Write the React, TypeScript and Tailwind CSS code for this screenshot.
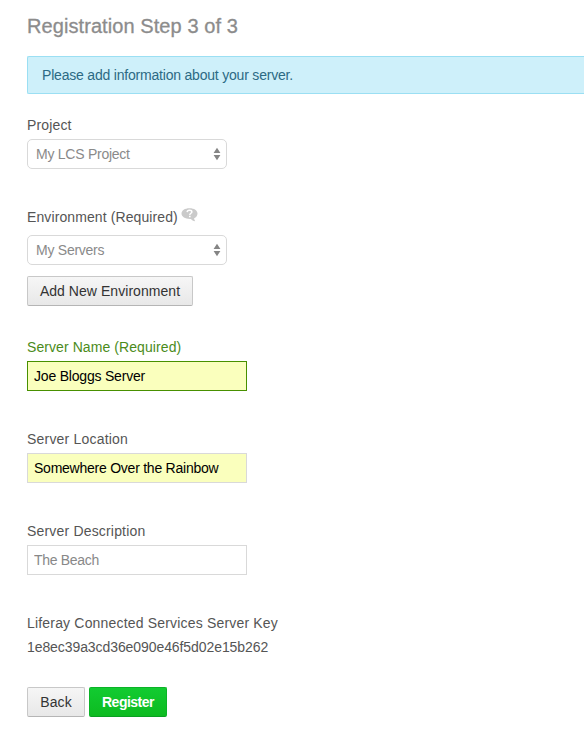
import type { ReactNode } from "react";

function Select({ value }: { value: string }) {
  return (
    <div className="flex h-[30px] w-[200px] items-center justify-between rounded-[5px] border border-[#d9d9d9] bg-white pr-[5px] pl-2 text-[#8a8a8a]">
      <span className="tracking-[-0.25px]">{value}</span>
      <svg width="8" height="14" viewBox="0 0 8 14" fill="#858585">
        <path d="M4 .8 7.4 6H.6ZM.6 8h6.8L4 13.2Z" />
      </svg>
    </div>
  );
}

function Label({ children, className }: { children: ReactNode; className: string }) {
  return <label className={`flex h-5 items-center whitespace-nowrap ${className}`}>{children}</label>;
}

function HelpIcon() {
  return (
    <svg className="mb-1 ml-[3px]" width="17" height="14" viewBox="0 0 17 14">
      <path d="M8.5.3c4.7 0 8 2.2 8 5.3 0 2.3-1.4 3.9-3.4 4.7.1 1.2.4 2.1 1.1 2.9-2-.2-3.4-1.1-4.3-2.2C4.6 11.3.5 9 .5 5.6.5 2.5 3.8.3 8.5.3Z" fill="#cacaca" />
      <path d="M6.1 4.1C6.2 2.8 7.2 2.2 8.5 2.2c1.4 0 2.4.6 2.4 1.7 0 1.3-2.1 1.5-2.1 3" fill="none" stroke="#fff" strokeWidth="1.4" />
      <path d="M8 7.8h1.6v1.5H8Z" fill="#fff" />
    </svg>
  );
}

export default function App() {
  return (
    <main className="h-[738px] w-[584px] overflow-hidden bg-white pl-[27px] font-['Liberation_Sans',Arial,sans-serif] text-[14px] leading-5 text-[#555]">
      <h1 className="mt-[11px] h-[30px] text-[20px] leading-[30px] tracking-[0.08px] text-[#8c8c8c] [-webkit-text-stroke:0.3px_#8c8c8c]">Registration Step 3 of 3</h1>
      <div className="mt-[15px] flex h-[38px] items-center rounded-l-[2px] border border-r-0 border-[#9bdff3] bg-[#cef0fa] pl-[14px] text-[#2c6a84]">
        <span className="tracking-[-0.2px]">Please add information about your server.</span>
      </div>
      <section className="mt-[21px] flex flex-col gap-1">
        <Label className="tracking-[0.15px]">Project</Label>
        <Select value="My LCS Project" />
      </section>
      <section className="mt-[38px] flex flex-col items-start">
        <Label className="mb-2 tracking-[0.1px]">Environment (Required)<HelpIcon /></Label>
        <Select value="My Servers" />
        <button className="mt-[11px] h-[30px] w-[166px] rounded-[2px] border border-[#c8c8c8] border-b-[#b5b5b5] bg-linear-to-b from-[#f6f6f6] to-[#e8e8e8] tracking-[0.05px] whitespace-nowrap text-[#333]">Add New Environment</button>
      </section>
      <section className="mt-[31px] flex flex-col gap-1">
        <Label className="tracking-[0.08px] text-[#4b8b1b]">Server Name (Required)</Label>
        <input className="h-[30px] w-[220px] border border-[#489000] bg-[#faffbd] px-1.5 tracking-[-0.2px] text-black outline-none" defaultValue="Joe Bloggs Server" />
      </section>
      <section className="mt-[38px] flex flex-col gap-1">
        <Label className="tracking-[0.2px]">Server Location</Label>
        <input className="h-[30px] w-[220px] border border-[#d9d9d9] bg-[#faffbd] px-1.5 tracking-[-0.24px] text-black outline-none" defaultValue="Somewhere Over the Rainbow" />
      </section>
      <section className="mt-[38px] flex flex-col gap-1">
        <Label className="tracking-[0.18px]">Server Description</Label>
        <input className="h-[30px] w-[220px] border border-[#d9d9d9] bg-white px-1.5 tracking-[-0.3px] text-[#888] outline-none" defaultValue="The Beach" />
      </section>
      <section className="mt-[38px] flex flex-col gap-1">
        <Label className="tracking-[0.18px]">Liferay Connected Services Server Key</Label>
        <span className="h-5 tracking-[-0.08px]">1e8ec39a3cd36e090e46f5d02e15b262</span>
      </section>
      <div className="mt-[30px] flex gap-1">
        <button className="h-[30px] w-[58px] rounded-[2px] border border-[#c8c8c8] border-b-[#b5b5b5] bg-linear-to-b from-[#f6f6f6] to-[#e8e8e8] tracking-[0.1px] text-[#333]">Back</button>
        <button className="h-[30px] w-[78px] rounded-[2px] border border-[#0bb327] border-b-[#0a9f22] bg-linear-to-b from-[#12cb31] to-[#0dbb20] font-bold tracking-[-0.5px] text-white">Register</button>
      </div>
    </main>
  );
}
